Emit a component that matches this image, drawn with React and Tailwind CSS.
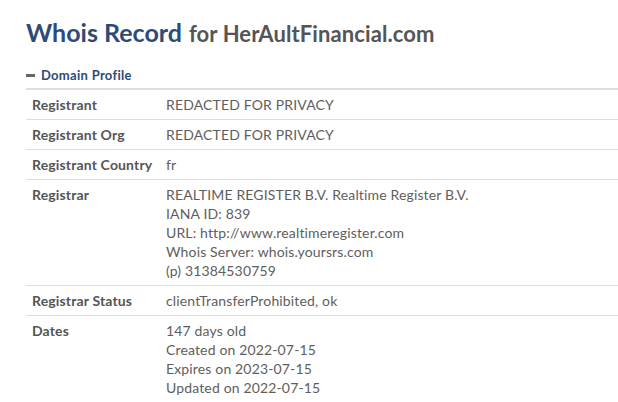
export default function App() {
  const rows = [
    { label: 'Registrant', lines: ['REDACTED FOR PRIVACY'] },
    { label: 'Registrant Org', lines: ['REDACTED FOR PRIVACY'] },
    { label: 'Registrant Country', lines: ['fr'] },
    {
      label: 'Registrar',
      lines: [
        'REALTIME REGISTER B.V. Realtime Register B.V.',
        'IANA ID: 839',
        'URL: http://www.realtimeregister.com',
        'Whois Server: whois.yoursrs.com',
        '(p) 31384530759',
      ],
    },
    { label: 'Registrar Status', lines: ['clientTransferProhibited, ok'] },
    {
      label: 'Dates',
      lines: ['147 days old', 'Created on 2022-07-15', 'Expires on 2023-07-15', 'Updated on 2022-07-15'],
    },
  ];

  return (
    <div className="w-[618px] h-[402px] overflow-hidden bg-white pl-[26px] pt-[16px] font-['Lato','Liberation_Sans',sans-serif]">
      <h1 className="leading-[32px] h-[32px]">
        <span className="text-[25px] font-bold text-[#2e4a78]">Whois Record</span>
        <span className="ml-[7px] text-[22px] font-bold text-[#555] tracking-[0.1px]">for HerAultFinancial.com</span>
      </h1>

      <div className="mt-[17px] flex items-center gap-[6px] text-[13px] font-bold text-[#2e4a78] leading-[20px] tracking-[0.3px]">
        <span className="block w-[9px] h-[3px] bg-[#666]" />
        <span>Domain Profile</span>
      </div>

      <div className="mt-[3px] border-t-2 border-[#ddd]">
        {rows.map((row) => (
          <div
            key={row.label}
            className="flex border-b border-[#ddd] text-[14px] leading-[19px] tracking-[0.15px] py-[5px]"
          >
            <div className="w-[140px] shrink-0 pl-[6px] font-bold text-[#555]">{row.label}</div>
            <div className="text-[#5e5e5e]">
              {row.lines.map((line) => (
                <div key={line}>{line}</div>
              ))}
            </div>
          </div>
        ))}
      </div>
    </div>
  );
}
